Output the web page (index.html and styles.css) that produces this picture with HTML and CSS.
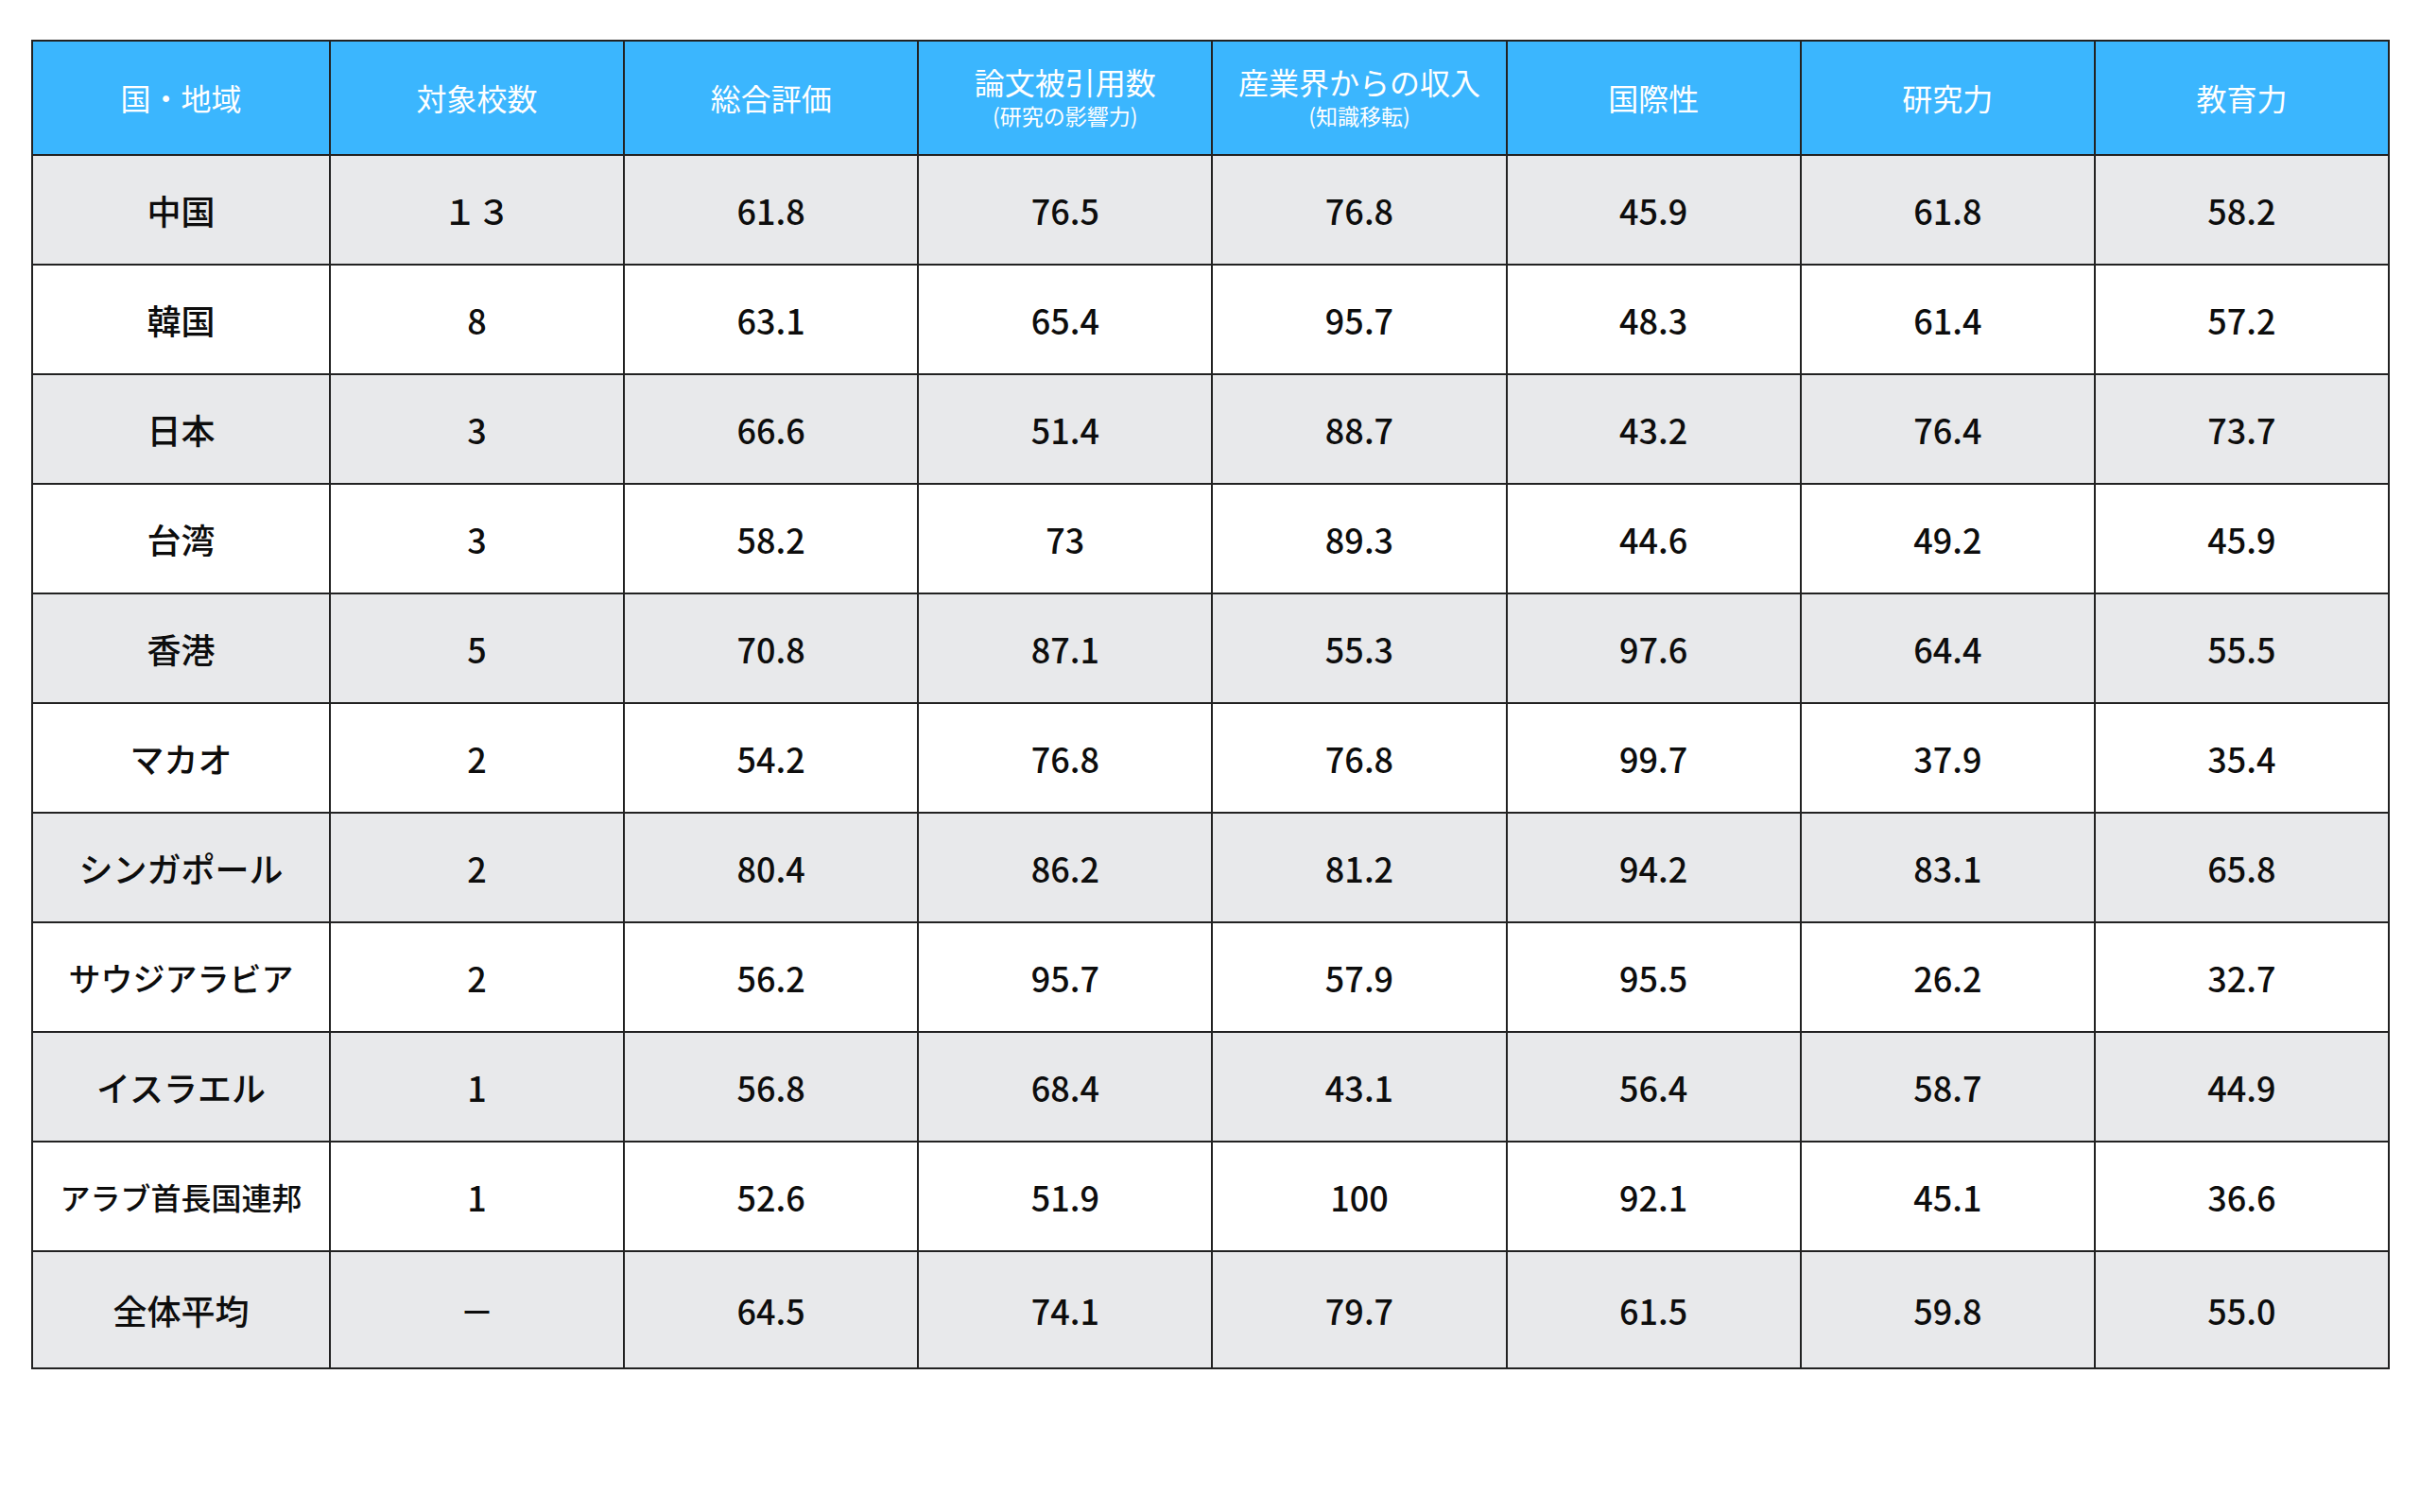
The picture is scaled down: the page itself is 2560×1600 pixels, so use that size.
FILE: index.html
```html
<!DOCTYPE html>
<html lang="ja">
<head>
<meta charset="utf-8">
<title>国・地域別スコア</title>
<link rel="stylesheet" href="styles.css">
</head>
<body>
<table class="score-table">
  <colgroup>
    <col class="col-first">
    <col><col><col><col><col><col><col>
  </colgroup>
  <thead>
    <tr>
      <th>国・地域</th>
      <th>対象校数</th>
      <th>総合評価</th>
      <th><span class="main">論文被引用数</span><span class="sub">(研究の影響力)</span></th>
      <th><span class="main">産業界からの収入</span><span class="sub">(知識移転)</span></th>
      <th>国際性</th>
      <th>研究力</th>
      <th>教育力</th>
    </tr>
  </thead>
  <tbody>
    <tr class="shade"><td>中国</td><td>１３</td><td>61.8</td><td>76.5</td><td>76.8</td><td>45.9</td><td>61.8</td><td>58.2</td></tr>
    <tr><td>韓国</td><td>8</td><td>63.1</td><td>65.4</td><td>95.7</td><td>48.3</td><td>61.4</td><td>57.2</td></tr>
    <tr class="shade"><td>日本</td><td>3</td><td>66.6</td><td>51.4</td><td>88.7</td><td>43.2</td><td>76.4</td><td>73.7</td></tr>
    <tr><td>台湾</td><td>3</td><td>58.2</td><td>73</td><td>89.3</td><td>44.6</td><td>49.2</td><td>45.9</td></tr>
    <tr class="shade"><td>香港</td><td>5</td><td>70.8</td><td>87.1</td><td>55.3</td><td>97.6</td><td>64.4</td><td>55.5</td></tr>
    <tr><td>マカオ</td><td>2</td><td>54.2</td><td>76.8</td><td>76.8</td><td>99.7</td><td>37.9</td><td>35.4</td></tr>
    <tr class="shade"><td>シンガポール</td><td>2</td><td>80.4</td><td>86.2</td><td>81.2</td><td>94.2</td><td>83.1</td><td>65.8</td></tr>
    <tr><td class="mid">サウジアラビア</td><td>2</td><td>56.2</td><td>95.7</td><td>57.9</td><td>95.5</td><td>26.2</td><td>32.7</td></tr>
    <tr class="shade"><td>イスラエル</td><td>1</td><td>56.8</td><td>68.4</td><td>43.1</td><td>56.4</td><td>58.7</td><td>44.9</td></tr>
    <tr><td class="small">アラブ首長国連邦</td><td>1</td><td>52.6</td><td>51.9</td><td>100</td><td>92.1</td><td>45.1</td><td>36.6</td></tr>
    <tr class="shade total"><td>全体平均</td><td>－</td><td>64.5</td><td>74.1</td><td>79.7</td><td>61.5</td><td>59.8</td><td>55.0</td></tr>
  </tbody>
</table>
</body>
</html>
```
FILE: styles.css
```css
html, body {
  margin: 0;
  padding: 0;
  background: #ffffff;
}

body {
  padding: 42px 0 0 33px;
  font-family: "Noto Sans CJK JP", "Noto Sans", sans-serif;
  color: #111111;
}

.score-table {
  width: 2495px;
  table-layout: fixed;
  border-collapse: collapse;
  border: 2px solid #333333;
}

.score-table .col-first {
  width: 315px;
}

.score-table th,
.score-table td {
  border: 2px solid #222222;
  text-align: center;
  vertical-align: middle;
  padding: 0;
}

.score-table thead th {
  height: 119px;
  background: #3bb6fe;
  color: #ffffff;
  font-size: 32px;
  font-weight: 400;
  line-height: 1.2;
}

.score-table th .main {
  display: block;
  line-height: 38px;
}

.score-table th .sub {
  display: block;
  font-size: 23px;
  line-height: 34px;
  margin-bottom: 2px;
}

.score-table td {
  height: 114px;
  font-size: 36px;
  font-weight: 500;
  color: #0d0d0d;
}

.score-table tr.shade td {
  background: #e8e9eb;
}

.score-table tr.total td {
  height: 122px;
}

.score-table td.mid {
  font-size: 34px;
}

.score-table td.small {
  font-size: 32px;
}
```
